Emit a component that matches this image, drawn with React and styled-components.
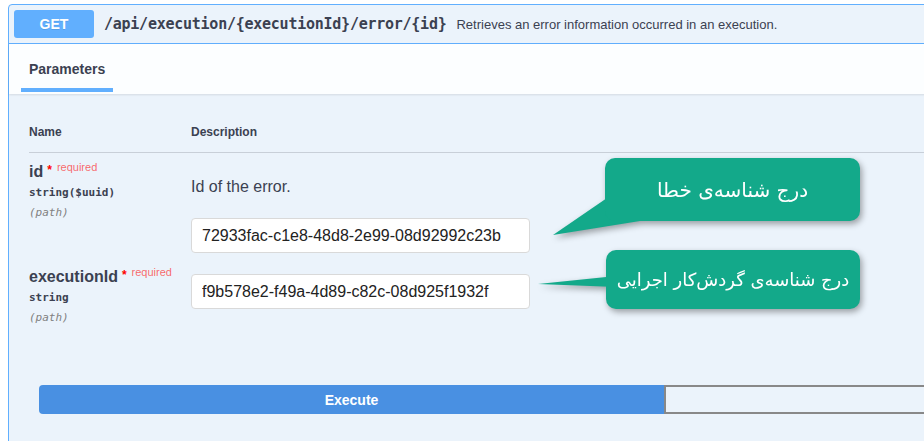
import React from "react";
import styled, { createGlobalStyle } from "styled-components";

const Global = createGlobalStyle`
  html, body { margin: 0; background: #fff; overflow: hidden; }
  #root { padding: 4px 0 0 8px; }
`;

const Page = styled.div`
  position: relative;
  width: 1300px;
  font-family: "Liberation Sans", Arial, sans-serif;
  color: #3b4151;
`;

const Block = styled.div`
  border: 1px solid #61affe;
  border-radius: 4px;
  background: #ebf3fb;
`;

const Header = styled.div`
  display: flex;
  align-items: center;
  padding: 5px;
  border-bottom: 1px solid #61affe;
`;

const Method = styled.span`
  width: 80px;
  height: 28px;
  display: flex;
  align-items: center;
  justify-content: center;
  background: #61affe;
  border-radius: 3px;
  color: #fff;
  font-weight: bold;
  font-size: 14px;
  text-shadow: 0 1px 0 rgba(0,0,0,.1);
`;

const Path = styled.span`
  padding: 0 10px;
  font-family: "DejaVu Sans Mono", monospace;
  font-weight: 600;
  font-size: 15px;
  letter-spacing: -0.25px;
`;

const Summary = styled.span`
  font-size: 13px;
`;

const Tabs = styled.div`
  height: 50px;
  padding: 0 12px;
  background: rgba(255,255,255,.85);
  box-shadow: 0 1px 2px rgba(0,0,0,.1);
  display: flex;
  align-items: flex-start;
`;

const Tab = styled.div`
  height: 48px;
  box-sizing: border-box;
  padding: 6px 8px 0;
  border-bottom: 4px solid #61affe;
  display: flex;
  align-items: center;
  font-weight: bold;
  font-size: 14px;
`;

const Body = styled.div`
  padding: 18px 20px 0;
`;

const HeadRow = styled.div`
  display: grid;
  grid-template-columns: 162px 1fr;
  height: 40px;
  align-items: center;
  border-bottom: 1px solid rgba(59,65,81,.2);
  font-weight: bold;
  font-size: 12px;
`;

const Row = styled.div`
  display: grid;
  grid-template-columns: 162px 1fr;
  padding: 10px 0 5px;
`;

const NameCell = styled.div`
  display: flex;
  flex-direction: column;
`;

const ParamName = styled.div`
  height: 18px;
  font-weight: bold;
  font-size: 16px;
  line-height: 18px;
  white-space: nowrap;
`;

const Star = styled.span`
  color: #f00;
  font-size: 12px;
  line-height: 0;
  margin-left: 4px;
  vertical-align: 3px;
`;

const Required = styled.span`
  color: rgba(255,0,0,.6);
  font-size: 11px;
  font-weight: normal;
  line-height: 0;
  margin-left: 5px;
  vertical-align: 6px;
`;

const Type = styled.div`
  margin-top: 2px;
  font-family: "DejaVu Sans Mono", monospace;
  font-weight: 600;
  font-size: 11px;
  line-height: 20px;
`;

const In = styled.div`
  font-family: "DejaVu Sans Mono", monospace;
  font-style: italic;
  font-weight: 300;
  font-size: 11px;
  line-height: 20px;
  color: gray;
`;

const DescCell = styled.div`
  display: flex;
  flex-direction: column;
`;

const Desc = styled.p`
  margin: 14px 0 0;
  font-size: 16px;
  line-height: 20px;
`;

const Input = styled.input`
  width: 339px;
  height: 35px;
  box-sizing: border-box;
  margin-top: ${(p) => p.$top}px;
  padding: 0 10px;
  border: 1px solid #d9d9d9;
  border-radius: 4px;
  background: #fff;
  font-family: "Liberation Sans", Arial, sans-serif;
  font-size: 16px;
  color: #222;
  outline: none;
`;

const Actions = styled.div`
  display: flex;
  padding: 52px 30px 40px;
`;

const Execute = styled.button`
  width: 625px;
  height: 29px;
  border: none;
  border-radius: 4px 0 0 4px;
  background: #4990e2;
  color: #fff;
  font-family: "Liberation Sans", Arial, sans-serif;
  font-weight: bold;
  font-size: 14px;
`;

const Clear = styled.button`
  flex: 1;
  height: 29px;
  border: 2px solid #888;
  border-radius: 0 4px 4px 0;
  background: transparent;
`;

const Callout = styled.div`
  position: absolute;
  left: ${(p) => p.$x}px;
  top: ${(p) => p.$y}px;
  width: ${(p) => p.$w}px;
  height: ${(p) => p.$h}px;
  filter: drop-shadow(2px 3px 3px rgba(0,0,0,.35));
`;

const Bubble = styled.div`
  position: relative;
  height: 100%;
  border-radius: 10px;
  background: #13a98a;
  color: #fff;
  display: flex;
  align-items: center;
  justify-content: center;
  font-family: "DejaVu Sans", sans-serif;
  font-size: ${(p) => p.$size}px;
  direction: rtl;
`;

const Tail = styled.svg`
  position: absolute;
  left: ${(p) => p.$x}px;
  top: ${(p) => p.$y}px;
`;

export default function App() {
  return (
    <Page>
      <Global />
      <Block>
        <Header>
          <Method>GET</Method>
          <Path>/api/execution/{"{executionId}"}/error/{"{id}"}</Path>
          <Summary>Retrieves an error information occurred in an execution.</Summary>
        </Header>
        <Tabs>
          <Tab>Parameters</Tab>
        </Tabs>
        <Body>
          <HeadRow>
            <span>Name</span>
            <span>Description</span>
          </HeadRow>
          <Row>
            <NameCell>
              <ParamName>
                id<Star>*</Star><Required>required</Required>
              </ParamName>
              <Type>string($uuid)</Type>
              <In>(path)</In>
            </NameCell>
            <DescCell>
              <Desc>Id of the error.</Desc>
              <Input $top={21} defaultValue="72933fac-c1e8-48d8-2e99-08d92992c23b" />
            </DescCell>
          </Row>
          <Row>
            <NameCell>
              <ParamName>
                executionId<Star>*</Star><Required>required</Required>
              </ParamName>
              <Type>string</Type>
              <In>(path)</In>
            </NameCell>
            <DescCell>
              <Input $top={6} defaultValue="f9b578e2-f49a-4d89-c82c-08d925f1932f" />
            </DescCell>
          </Row>
        </Body>
        <Actions>
          <Execute>Execute</Execute>
          <Clear />
        </Actions>
      </Block>

      <Callout $x={597} $y={154} $w={255} $h={63}>
        <Tail $x={-56} $y={40} width="110" height="40">
          <polygon points="58,0 4,37 91,23 91,0" fill="#13a98a" />
        </Tail>
        <Bubble $size={20}>درج شناسه‌ی خطا</Bubble>
      </Callout>
      <Callout $x={598} $y={246} $w={254} $h={59}>
        <Tail $x={-70} $y={20} width="82" height="20">
          <polygon points="80,6 2,14 80,17" fill="#13a98a" />
        </Tail>
        <Bubble $size={18}>درج شناسه‌ی گردش‌کار اجرایی</Bubble>
      </Callout>
    </Page>
  );
}
